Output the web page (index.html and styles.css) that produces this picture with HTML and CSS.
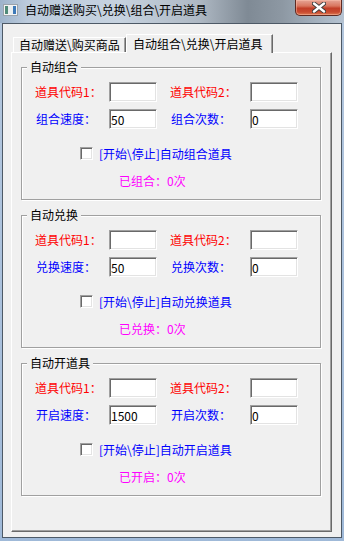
FILE: index.html
```html
<!DOCTYPE html>
<html lang="zh-CN">
<head>
  <meta charset="UTF-8">
  <title>自动赠送购买\兑换\组合\开启道具</title>
  <link rel="stylesheet" href="styles.css">
</head>
<body>

<div class="window">
  <div class="titlebar">
    <svg class="app-icon" width="15" height="12" viewBox="0 0 15 12">
      <rect x="0.5" y="0.5" width="14" height="11" fill="#f4f4f4" stroke="#9aa3ab"/>
      <rect x="2" y="2" width="3" height="8" fill="#4f8a78"/>
      <rect x="5" y="2" width="5" height="8" fill="#e8eef0"/>
      <rect x="10" y="2" width="3" height="8" fill="#3d79b8"/>
    </svg>
    <span class="title">自动赠送购买\兑换\组合\开启道具</span>
    <div class="close-btn">
      <svg width="14" height="11" viewBox="0 0 14 11">
        <path d="M2 1.5 L12 9.5 M12 1.5 L2 9.5" stroke="#3b3b3b" stroke-width="4.2" stroke-linecap="round"/>
        <path d="M2 1.5 L12 9.5 M12 1.5 L2 9.5" stroke="#ffffff" stroke-width="2.4" stroke-linecap="round"/>
      </svg>
    </div>
  </div>

  <div class="client">
    <div class="tabs">
      <div class="tab tab-first">自动赠送\购买商品</div>
      <div class="tab active">自动组合\兑换\开启道具</div>
    </div>

    <div class="pane">
      <!-- 自动组合 -->
      <div class="group">
        <span class="group-title">自动组合</span>
        <div class="fields">
          <label class="code">道具代码1：</label><input type="text" value="">
          <span></span>
          <label class="code">道具代码2：</label><input type="text" value="">
          <label class="speed">组合速度：</label><input type="text" value="50">
          <span></span>
          <label class="speed">组合次数：</label><input type="text" value="0">
        </div>
        <label class="toggle"><span class="check"></span>[开始\停止]自动组合道具</label>
        <div class="counter">已组合：0次</div>
      </div>

      <!-- 自动兑换 -->
      <div class="group">
        <span class="group-title">自动兑换</span>
        <div class="fields">
          <label class="code">道具代码1：</label><input type="text" value="">
          <span></span>
          <label class="code">道具代码2：</label><input type="text" value="">
          <label class="speed">兑换速度：</label><input type="text" value="50">
          <span></span>
          <label class="speed">兑换次数：</label><input type="text" value="0">
        </div>
        <label class="toggle"><span class="check"></span>[开始\停止]自动兑换道具</label>
        <div class="counter">已兑换：0次</div>
      </div>

      <!-- 自动开道具 -->
      <div class="group">
        <span class="group-title">自动开道具</span>
        <div class="fields">
          <label class="code">道具代码1：</label><input type="text" value="">
          <span></span>
          <label class="code">道具代码2：</label><input type="text" value="">
          <label class="speed">开启速度：</label><input type="text" value="1500">
          <span></span>
          <label class="speed">开启次数：</label><input type="text" value="0">
        </div>
        <label class="toggle"><span class="check"></span>[开始\停止]自动开启道具</label>
        <div class="counter">已开启：0次</div>
      </div>
    </div>
  </div>
</div>

</body>
</html>
```

FILE: styles.css
```css
body { margin: 0; font-family: "Noto Sans CJK SC", "Noto Sans", sans-serif; font-size: 12px; line-height: 14px; }

.window { width: 344px; height: 541px; display: flex; flex-direction: column; background: linear-gradient(180deg, #b4c7dd 0%, #a9c0dc 60%, #9fb9d8 100%); }

/* title bar */
.titlebar { height: 23px; display: flex; align-items: flex-start; background: linear-gradient(90deg, #9db3cb 0%, #bccbdc 8%, #c6d2df 35%, #aeb8c3 58%, #7f8a95 72%, #8d98a3 82%, #b5c3d2 100%); }
.app-icon { margin: 4px 7px 0 3px; flex: none; }
.title { padding-top: 3px; color: #000; white-space: nowrap; }
.close-btn { margin: 0 2px 0 auto; width: 47px; height: 16px; box-sizing: border-box; border: 1px solid #5e2a22; border-top: none; border-radius: 0 0 5px 5px; display: flex; align-items: center; justify-content: center; background: linear-gradient(180deg, #e6a596 0%, #d9765f 40%, #c23f28 55%, #c94a30 80%, #dc7a52 100%); box-shadow: inset 0 0 0 1px rgba(255,200,180,0.45); }

/* client area */
.client { flex: 1; margin: 0 2px 3px 2px; border: 1px solid #4d5966; background: #f0f0f0; display: flex; flex-direction: column; }

.tabs { height: 28px; padding-left: 10px; display: flex; align-items: flex-end; box-sizing: border-box; }
.tab { box-sizing: border-box; white-space: nowrap; color: #000; background: #f0f0f0; border-top: 1px solid #fff; border-left: 1px solid #fff; border-right: 1px solid #696969; box-shadow: inset -1px 0 #a0a0a0; }
.tab-first { width: 113px; height: 15px; padding-left: 5px; line-height: 14px; }
.tab.active { width: 147px; height: 19px; padding: 2px 0 0 6px; margin-bottom: -1px; position: relative; z-index: 1; }

.pane { margin: 0 9px 5px 8px; flex: 1; box-sizing: border-box; border-top: 1px solid #fff; border-left: 1px solid #fff; border-right: 1px solid #696969; border-bottom: 1px solid #696969; box-shadow: inset -1px -1px #a0a0a0; padding: 14px 0 0 9px; display: flex; flex-direction: column; gap: 15px; }

/* group boxes */
.group { width: 300px; height: 133px; box-sizing: border-box; border: 1px solid #a0a0a0; box-shadow: inset 1px 1px #fff, 1px 1px #fff; display: flex; flex-direction: column; }
.group-title { align-self: flex-start; margin: -8px 0 0 5px; padding: 0 3px; background: #f0f0f0; color: #000; }

.fields { margin: 8px 0 0 13px; display: grid; grid-template-columns: 74px 48px 13px 80px 48px; grid-auto-rows: 20px; row-gap: 7px; align-items: center; }
.fields label { white-space: nowrap; }
.code { color: #ff0000; }
.speed { color: #0000ff; padding-left: 1px; }
.fields input { width: 48px; height: 20px; box-sizing: border-box; margin: 0; padding: 0 1px; font: inherit; font-size: 12px; color: #000; background: #fff; border: 1px solid; border-color: #a0a0a0 #fff #fff #a0a0a0; box-shadow: inset 1px 1px #696969, inset -1px -1px #e3e3e3; outline: none; }

.toggle { margin: 18px 0 0 58px; display: flex; align-items: center; gap: 6px; color: #0000ff; white-space: nowrap; height: 13px; }
.check { width: 13px; height: 13px; box-sizing: border-box; flex: none; background: #fff; border: 1px solid; border-color: #a0a0a0 #fff #fff #a0a0a0; box-shadow: inset 1px 1px #696969, inset -1px -1px #e3e3e3; }

.counter { margin: 14px 0 0 97px; color: #ff00ff; white-space: nowrap; }
```
